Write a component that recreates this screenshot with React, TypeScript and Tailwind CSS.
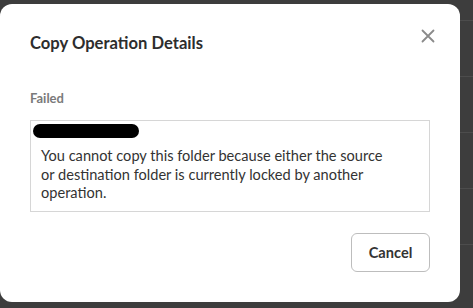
import React from 'react';

const rows = [21, 56, 56, 56, 56, 63];

function CloseIcon() {
  return (
    <svg width="14" height="14" viewBox="0 0 14 14" fill="none" stroke="#8a8a8a" strokeWidth={1.8} strokeLinecap="round">
      <path d="M1.5 1.5l11 11M12.5 1.5l-11 11" />
    </svg>
  );
}

export default function App() {
  return (
    <div
      className="flex h-[308px] w-[473px] overflow-hidden bg-[#3d3d3d]"
      style={{ fontFamily: 'Lato, "Open Sans", "Liberation Sans", sans-serif' }}
    >
      <div className="w-[460px] shrink-0 pt-[4px]">
        <div className="flex h-[298px] flex-col rounded-[12px] bg-white">
          {/* Header */}
          <div className="flex items-start justify-between pl-[30px] pr-[25px] pt-[27px]">
            <h2 className="text-[16.6px] font-bold leading-[24px] text-[#2d2d2d]">Copy Operation Details</h2>
            <button className="mt-[-2px]" title="Close">
              <CloseIcon />
            </button>
          </div>

          {/* Body */}
          <div className="px-[30px] pt-[34px]">
            <div className="text-[13px] font-bold leading-[18px] text-[#7a7a7a]">Failed</div>
            <div className="mt-[13px] h-[92px] border border-[#d6d6d6] px-[10px] pt-[3px]">
              <div className="ml-[-8px] h-[14px] w-[106px] rounded-full bg-black" />
              <p className="mt-[9px] text-[14.6px] leading-[18.5px] text-[#333]">
                You cannot copy this folder because either the source
                <br />
                or destination folder is currently locked by another
                <br />
                operation.
              </p>
            </div>
          </div>

          {/* Footer */}
          <div className="flex justify-end px-[30px] pt-[21px]">
            <button className="h-[39px] w-[79px] rounded-[6px] border border-[#bdbdbd] text-[14.6px] font-bold text-[#333]">
              Cancel
            </button>
          </div>
        </div>
      </div>

      {/* table behind the overlay */}
      <div className="flex flex-1 flex-col">
        {rows.map((h, i) => (
          <div
            key={i}
            className={`border-b border-[#4c4c4c] ${i === rows.length - 1 ? 'border-b-0' : ''}`}
            style={{ height: h }}
          />
        ))}
      </div>
    </div>
  );
}
